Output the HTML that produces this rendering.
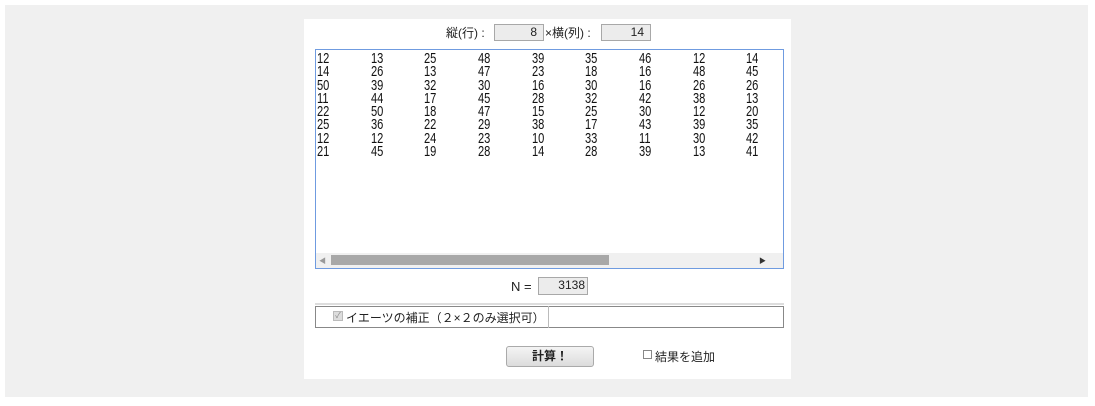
<!DOCTYPE html>
<html><head><meta charset="utf-8"><style>
*{margin:0;padding:0;box-sizing:border-box}
body{width:1095px;height:406px;background:#fff;position:relative;overflow:hidden;font-family:"Liberation Sans","Noto Sans CJK JP",sans-serif;color:#222}
.abs{position:absolute}
.bg{left:5px;top:5px;width:1083px;height:392px;background:#f0f0f0}
.panel{left:304px;top:19px;width:487px;height:360px;background:#fff}
.in{background:#ececec;border:1px solid #a8a8a8;font-size:12px;text-align:right;padding-right:6px;line-height:15px;height:17px}
.lbl{font-size:12px}
.ta{left:315px;top:49px;width:469px;height:220px;border:1px solid #6f9be0;background:#fff}
.col{position:absolute;top:2px;font-size:15px;line-height:13.3px;transform:scaleX(0.74);transform-origin:left top;color:#111}
</style></head><body>
<div class="abs bg"></div>
<div class="abs panel"></div>
<div class="abs lbl" style="left:446px;top:24px">縦(行) :</div>
<div class="abs in" style="left:494px;top:24px;width:50px">8</div>
<div class="abs lbl" style="left:545px;top:24px">×横(列) :</div>
<div class="abs in" style="left:601px;top:24px;width:50px">14</div>
<div class="abs ta">
<div class="col" style="left:1px">12<br>14<br>50<br>11<br>22<br>25<br>12<br>21</div>
<div class="col" style="left:55px">13<br>26<br>39<br>44<br>50<br>36<br>12<br>45</div>
<div class="col" style="left:108px">25<br>13<br>32<br>17<br>18<br>22<br>24<br>19</div>
<div class="col" style="left:162px">48<br>47<br>30<br>45<br>47<br>29<br>23<br>28</div>
<div class="col" style="left:216px">39<br>23<br>16<br>28<br>15<br>38<br>10<br>14</div>
<div class="col" style="left:269px">35<br>18<br>30<br>32<br>25<br>17<br>33<br>28</div>
<div class="col" style="left:323px">46<br>16<br>16<br>42<br>30<br>43<br>11<br>39</div>
<div class="col" style="left:377px">12<br>48<br>26<br>38<br>12<br>39<br>30<br>13</div>
<div class="col" style="left:430px">14<br>45<br>26<br>13<br>20<br>35<br>42<br>41</div>
<div class="abs" style="left:0;top:203px;width:467px;height:15px;background:#f0f0f0"></div>
<div class="abs" style="left:15px;top:205px;width:278px;height:10px;background:#a8a8a8"></div>
<div class="abs" style="left:3px;top:206px;font-size:7px;color:#999">◀</div>
<div class="abs" style="left:443px;top:206px;font-size:7px;color:#333">▶</div>
</div>
<div class="abs lbl" style="left:511px;top:279px;font-size:13px">N =</div>
<div class="abs in" style="left:538px;top:277px;width:50px;height:18px;text-align:right;padding-right:2px">3138</div>
<div class="abs" style="left:315px;top:303px;width:469px;height:2px;background:#ddd"></div>
<div class="abs" style="left:315px;top:306px;width:469px;height:22px;border:1px solid #888"></div>
<div class="abs" style="left:548px;top:306px;width:1px;height:22px;background:#bbb"></div>
<div class="abs" style="left:333px;top:311px;width:10px;height:10px;background:#ddd;border:1px solid #bbb;font-size:8px;line-height:8px;color:#888;text-align:center">✓</div>
<div class="abs" style="left:346px;top:309px;font-size:12px">イエーツの補正（２×２のみ選択可）</div>
<div class="abs" style="left:506px;top:346px;width:88px;height:21px;background:linear-gradient(#f4f4f4,#dcdcdc);border:1px solid #aaa;border-radius:3px;font-size:12px;font-weight:bold;text-align:center;line-height:19px">計算！</div>
<div class="abs" style="left:643px;top:350px;width:9px;height:9px;border:1px solid #888;background:#fff"></div>
<div class="abs" style="left:655px;top:348px;font-size:12px">結果を追加</div>
</body></html>
